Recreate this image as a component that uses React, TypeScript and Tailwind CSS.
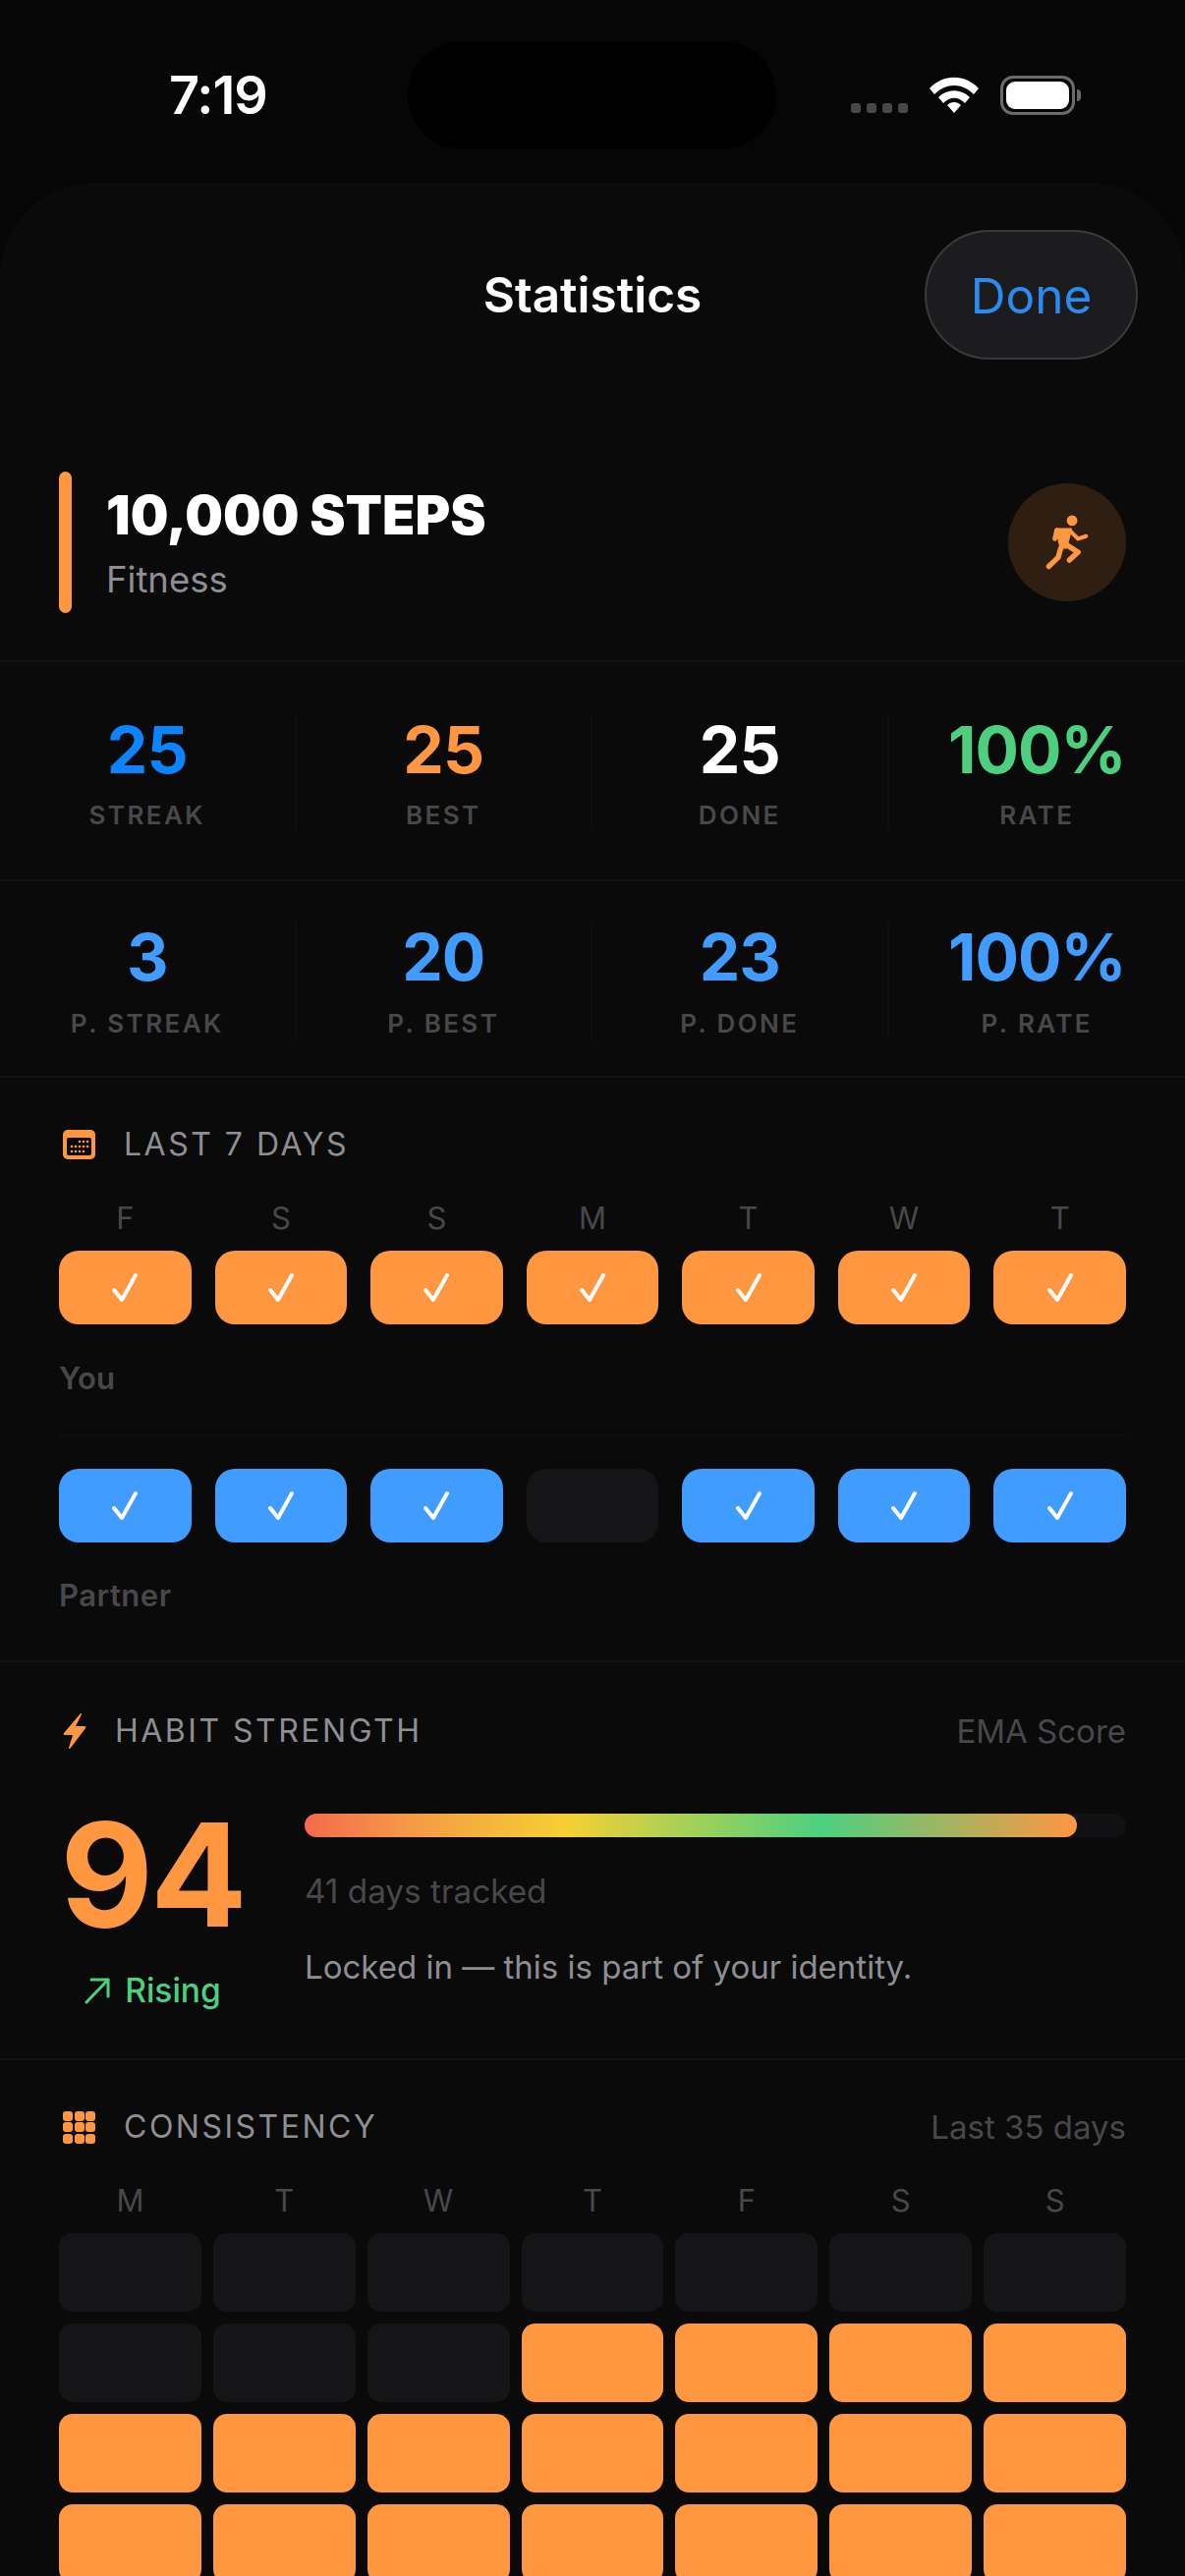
const ORANGE = "bg-[#ff9640]";

const sans = "font-['Inter','Noto_Sans',sans-serif]";

const mine = ["F", "S", "S", "M", "T", "W", "T"];
const partnerDone = [true, true, true, false, true, true, true];
const monthDays = ["M", "T", "W", "T", "F", "S", "S"];

const topStats = [
  { value: "25", label: "STREAK", color: "text-[#0a84ff]" },
  { value: "25", label: "BEST", color: "text-[#ff9640]" },
  { value: "25", label: "DONE", color: "text-white" },
  { value: "100%", label: "RATE", color: "text-[#4cd080]" },
];

const partnerStats = [
  { value: "3", label: "P. STREAK", color: "text-[#409cff]" },
  { value: "20", label: "P. BEST", color: "text-[#409cff]" },
  { value: "23", label: "P. DONE", color: "text-[#409cff]" },
  { value: "100%", label: "P. RATE", color: "text-[#409cff]" },
];

function Check() {
  return (
    <svg width="28" height="32" viewBox="0 0 28 32" fill="none">
      <path d="M3 18 L11 28 L25 3" stroke="white" strokeWidth="4" strokeLinecap="round" strokeLinejoin="round" />
    </svg>
  );
}

function Wifi() {
  return (
    <svg width="50" height="38" viewBox="0 0 50 38" fill="white">
      <path d="M0 12 C14 -3 36 -3 50 12 L45 18 C33 6 17 6 5 18 Z" />
      <path d="M9 21 C18 12 32 12 41 21 L36 27 C29 20 21 20 14 27 Z" />
      <path d="M18 29 C22 25 28 25 32 29 L25 37 Z" />
    </svg>
  );
}

function Runner() {
  return (
    <svg width="44" height="56" viewBox="0 0 130 165" fill="none" stroke="#ff9640" strokeLinecap="round" strokeLinejoin="round">
      <circle cx="80" cy="17" r="16" fill="#ff9640" stroke="none" />
      <path d="M34 44 L76 44 L62 98 L46 98 Z" fill="#ff9640" strokeWidth="8" />
      <path d="M34 46 L28 72" strokeWidth="14" />
      <path d="M78 52 L98 72 L122 64" strokeWidth="12" />
      <path d="M60 88 L98 112 L72 136" strokeWidth="16" />
      <path d="M46 100 L38 128 L10 155" strokeWidth="16" />
    </svg>
  );
}

function CalendarIcon() {
  const dots = [
    [17, 9],
    [21, 9],
    [25, 9],
    [9, 14],
    [13, 14],
    [17, 14],
    [21, 14],
    [25, 14],
    [9, 19],
    [13, 19],
    [17, 19],
    [21, 19],
  ];
  return (
    <svg width="33" height="30" viewBox="0 0 33 30">
      <rect width="33" height="30" rx="5" fill="#ff9640" />
      <rect x="4" y="8" width="25" height="18" rx="2" fill="#0a0a0c" />
      {dots.map(([x, y], i) => (
        <circle key={i} cx={x} cy={y + 3} r="1.3" fill="#ff9640" />
      ))}
    </svg>
  );
}

function Bolt() {
  return (
    <svg width="24" height="38" viewBox="0 0 24 38" fill="#ff9640">
      <path d="M18 1 L1 21 Q0 23 2 23 L10 23 L6 36 Q6 38 8 36 L23 16 Q24 14 22 14 L13 14 L19 2 Q19 0 18 1 Z" />
    </svg>
  );
}

function GridIcon() {
  return (
    <div className="grid w-[33px] grid-cols-3 gap-[1.5px]">
      {Array.from({ length: 9 }).map((_, i) => (
        <div key={i} className={`h-[10px] w-[10px] rounded-[3px] ${ORANGE}`} />
      ))}
    </div>
  );
}

function Arrow() {
  return (
    <svg width="28" height="28" viewBox="0 0 28 28" fill="none" stroke="#4cd080" strokeWidth="3" strokeLinecap="round" strokeLinejoin="round">
      <path d="M3 26 L25 3" />
      <path d="M8 3 L25 3 L25 20" />
    </svg>
  );
}

function StatsRow({ stats, rowClass, labelClass }: { stats: typeof topStats; rowClass: string; labelClass: string }) {
  return (
    <div className={`grid grid-cols-4 border-b-2 border-[#111113] ${rowClass}`}>
      {stats.map((s, i) => (
        <div key={s.label} className={`flex flex-col items-center ${i < 3 ? "border-r-2 border-[#0f0f11]" : ""}`}>
          <div className={`h-[70px] text-[66px] leading-[70px] font-bold tracking-[-1px] ${s.color}`}>{s.value}</div>
          <div className={`h-[30px] text-[26px] leading-[30px] font-semibold tracking-[2.4px] text-[#48484a] ${labelClass}`}>
            {s.label}
          </div>
        </div>
      ))}
    </div>
  );
}

function SectionTitle({ icon, title, note, gap }: { icon: React.ReactNode; title: string; note?: string; gap: string }) {
  return (
    <div className="flex h-[40px] items-center justify-between">
      <div className={`flex items-center pl-[4px] ${gap}`}>
        {icon}
        <span className="text-[32px] leading-[40px] font-normal tracking-[2.5px] text-[#8e8e93]">{title}</span>
      </div>
      {note && <span className="text-[33px] leading-[40px] text-[#48484a]">{note}</span>}
    </div>
  );
}

export default function App() {
  return (
    <div className={`h-[2622px] w-[1206px] overflow-hidden bg-[#060607] text-white ${sans}`}>
      {/* status bar */}
      <div className="relative flex h-[186px] items-start justify-between pt-[66px] pr-[106px] pl-[172px]">
        <span className="text-[54px] leading-[62px] font-semibold tracking-[-1px]">7:19</span>
        <div className="absolute top-[42px] left-[415px] h-[110px] w-[375px] rounded-full bg-black" />
        <div className="flex items-center pt-[11px]">
          <div className="mt-[26px] mr-[22px] flex gap-[6px]">
            {[0, 1, 2, 3].map((i) => (
              <div key={i} className="h-[10px] w-[10px] rounded-[3px] bg-[#48484a]" />
            ))}
          </div>
          <Wifi />
          <div className="ml-[22px] flex items-center">
            <div className="flex h-[40px] w-[76px] items-center justify-center rounded-[13px] border-[3px] border-[#6a6a6c]">
              <div className="h-[28px] w-[64px] rounded-[9px] bg-white" />
            </div>
            <div className="ml-[2px] h-[12px] w-[4px] rounded-r-full bg-[#6a6a6c]" />
          </div>
        </div>
      </div>

      {/* sheet */}
      <div className="rounded-t-[96px] bg-[#0a0a0b]">
        <div className="relative flex h-[228px] items-center justify-center">
          <span className="text-[49.5px] leading-[56px] font-semibold">Statistics</span>
          <div className="absolute top-[48px] right-[48px] flex h-[132px] w-[217px] items-center justify-center rounded-full border-2 border-[#3a3a3c] bg-[#1c1c1e]">
            <span className="pt-[2px] text-[49.5px] leading-[60px] text-[#2a8cf0]">Done</span>
          </div>
        </div>

        {/* habit */}
        <div className="flex items-center justify-between border-b-2 border-[#111113] pt-[66px] pr-[60px] pb-[48px] pl-[60px]">
          <div className="flex items-center gap-[35px]">
            <div className={`h-[144px] w-[13px] rounded-full ${ORANGE}`} />
            <div className="flex flex-col pt-[2px]">
              <span className="text-[54.5px] leading-[60px] font-black">10,000 STEPS</span>
              <span className="mt-[14px] text-[36.5px] leading-[44px] text-[#8e8e93]">Fitness</span>
            </div>
          </div>
          <div className="flex h-[120px] w-[120px] items-center justify-center rounded-full bg-[#2e1f12]">
            <Runner />
          </div>
        </div>

        <StatsRow stats={topStats} rowClass="pt-[54px] pb-[50px]" labelClass="mt-[17px]" />
        <StatsRow stats={partnerStats} rowClass="pt-[42px] pb-[38px]" labelClass="mt-[18px]" />

        {/* last 7 days */}
        <div className="border-b-2 border-[#111113] px-[60px] pt-[48px] pb-[48px]">
          <SectionTitle icon={<CalendarIcon />} title="LAST 7 DAYS" gap="gap-[29px]" />
          <div className="mt-[37px] grid grid-cols-7 gap-x-[24px]">
            {mine.map((d, i) => (
              <div key={i} className="h-[36px] text-center text-[31px] leading-[36px] text-[#48484a]">
                {d}
              </div>
            ))}
          </div>
          <div className="mt-[15px] grid grid-cols-7 gap-x-[24px]">
            {mine.map((_, i) => (
              <div key={i} className={`flex h-[75px] items-center justify-center rounded-[20px] ${ORANGE}`}>
                <Check />
              </div>
            ))}
          </div>
          <div className="mt-[37px] h-[36px] text-[31px] leading-[36px] font-semibold text-[#48484a]">You</div>
          <div className="mt-[39px] h-[2px] bg-[#0f0f11]" />
          <div className="mt-[33px] grid grid-cols-7 gap-x-[24px]">
            {partnerDone.map((done, i) => (
              <div
                key={i}
                className={`flex h-[75px] items-center justify-center rounded-[20px] ${done ? "bg-[#409cff]" : "bg-[#151517]"}`}
              >
                {done && <Check />}
              </div>
            ))}
          </div>
          <div className="mt-[36px] h-[36px] text-[31px] leading-[36px] font-semibold tracking-[0.5px] text-[#48484a]">Partner</div>
        </div>

        {/* habit strength */}
        <div className="border-b-2 border-[#111113] px-[60px] pt-[50px] pb-[49px]">
          <SectionTitle icon={<Bolt />} title="HABIT STRENGTH" note="EMA Score" gap="gap-[29px]" />
          <div className="mt-[56px] flex gap-[60px]">
            <div className="flex w-[190px] flex-col items-center">
              <div className="h-[140px] text-[146px] leading-[140px] font-bold tracking-[-3px] text-[#ff9640]">94</div>
              <div className="mt-[28px] flex h-[40px] items-center gap-[14px]">
                <Arrow />
                <span className="text-[33.5px] leading-[40px] font-medium text-[#4cd080]">Rising</span>
              </div>
            </div>
            <div className="flex-1 pt-[8px]">
              <div className="h-[24px] rounded-full bg-[#111113]">
                <div className="h-[24px] w-[94%] rounded-full bg-[linear-gradient(90deg,#f56a4d_0%,#f59b45_14%,#f5d033_34%,#4cd080_67%,#ff9640_100%)]" />
              </div>
              <div className="mt-[35px] h-[40px] text-[33.3px] leading-[40px] text-[#48484a]">41 days tracked</div>
              <div className="mt-[37px] h-[40px] text-[33px] leading-[40px] text-[#8e8e93]">
                Locked in — this is part of your identity.
              </div>
            </div>
          </div>
        </div>

        {/* consistency */}
        <div className="px-[60px] pt-[48px]">
          <SectionTitle icon={<GridIcon />} title="CONSISTENCY" note="Last 35 days" gap="gap-[29px]" />
          <div className="mt-[37px] grid grid-cols-7 gap-x-[12px]">
            {monthDays.map((d, i) => (
              <div key={i} className="h-[36px] text-center text-[31px] leading-[36px] text-[#48484a]">
                {d}
              </div>
            ))}
          </div>
          <div className="mt-[15px] grid grid-cols-7 gap-[12px]">
            {Array.from({ length: 35 }).map((_, i) => (
              <div key={i} className={`h-[80px] rounded-[14px] ${i < 10 ? "bg-[#151517]" : ORANGE}`} />
            ))}
          </div>
        </div>
      </div>
    </div>
  );
}
